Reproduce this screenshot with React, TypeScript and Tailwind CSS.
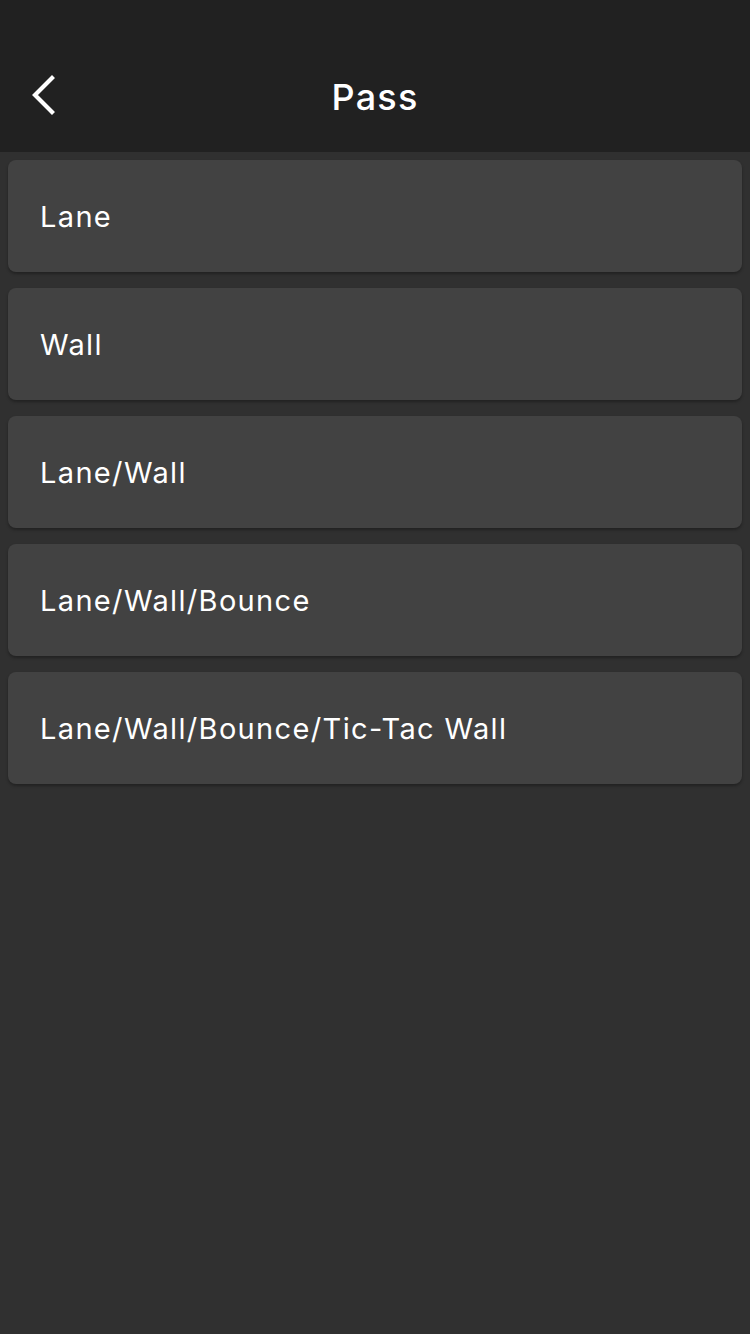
import React from "react";

const items = ["Lane", "Wall", "Lane/Wall", "Lane/Wall/Bounce", "Lane/Wall/Bounce/Tic-Tac Wall"];

export default function App() {
  return (
    <div className="min-h-[1334px] w-[750px] bg-[#303030] font-['Inter',sans-serif]">
      <div className="flex h-[152px] flex-col justify-end bg-[#212121] pb-[11px]">
        <div className="relative flex h-[88px] items-center justify-center">
          <svg className="absolute left-[27px] top-[21px]" width="32" height="42" viewBox="0 0 32 42">
            <path d="M25 4 L8 21 L25 38" fill="none" stroke="#ffffff" strokeWidth="4.2" strokeLinecap="square" />
          </svg>
          <span className="text-[36px] font-medium leading-none tracking-[1.2px] text-white">Pass</span>
        </div>
      </div>
      <div className="flex flex-col gap-4 px-2 pt-2">
        {items.map((t) => (
          <div
            key={t}
            className="flex h-[112px] items-center rounded-lg bg-[#424242] px-8 shadow-[0_2px_3px_rgba(0,0,0,0.3)]"
          >
            <span className="text-[29px] leading-none tracking-[1.35px] text-white">{t}</span>
          </div>
        ))}
      </div>
    </div>
  );
}
